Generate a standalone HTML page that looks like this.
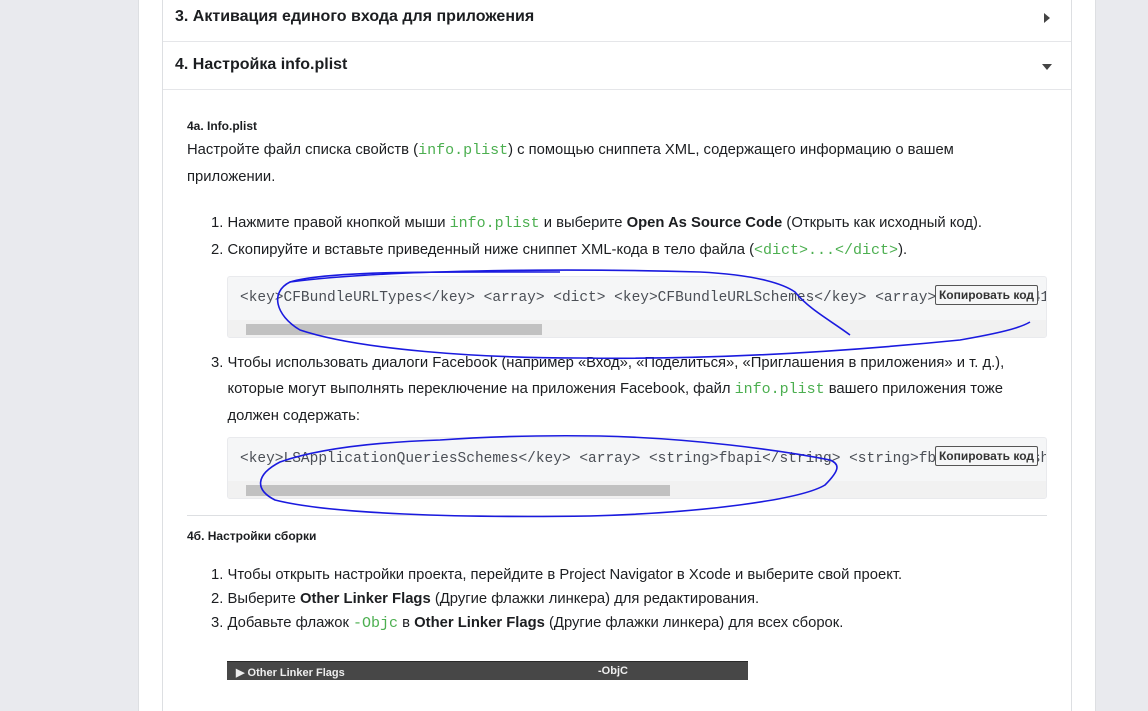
<!DOCTYPE html>
<html><head><meta charset="utf-8"><style>
*{margin:0;padding:0;box-sizing:border-box}
html,body{width:1148px;height:711px;overflow:hidden}
body{background:#e9eaee;font-family:"Liberation Sans",sans-serif;color:#1c1e21;position:relative}
.col{position:absolute;left:138px;top:0;width:958px;height:711px;background:#fff;border-left:1px solid #dddfe2;border-right:1px solid #dddfe2}
.card{position:absolute;left:162px;top:-2px;width:910px;height:713px;border-left:1px solid #dddfe2;border-right:1px solid #dddfe2}
.a{position:absolute;white-space:nowrap}
.h{font-size:16px;font-weight:bold;left:175px}
.hr{position:absolute;left:163px;width:908px;height:1px;background:#e5e6e9}
.t{font-size:14.8px;line-height:20px}
code{font-family:"Liberation Mono",monospace;color:#4caf50;font-size:15px}
.cb{position:absolute;left:227px;width:820px;height:62px;background:#f5f6f7;border:1px solid #e9eaed;border-radius:3px;overflow:hidden}
.cb .c{position:absolute;left:12px;top:13px;font-family:"Liberation Mono",monospace;font-size:14.5px;color:#4b4f56;white-space:nowrap}
.cb .sb{position:absolute;left:0;bottom:0;width:100%;height:17px;background:#f1f1f1}
.cb .th{position:absolute;left:18px;top:4px;height:11px;background:#c1c1c1}
.btn{position:absolute;right:8px;top:8px;border:1px solid #555;background:#f5f6f7;border-radius:2px;font-size:12px;font-weight:bold;padding:2px 3px;color:#333}
</style></head><body>
<div class="col"></div>
<div class="card"></div>
<div class="a h" style="top:8px">3. Активация единого входа для приложения</div>
<div class="a" style="left:1044px;top:13px;width:0;height:0;border-left:6px solid #444;border-top:5px solid transparent;border-bottom:5px solid transparent"></div>
<div class="hr" style="top:41px"></div>
<div class="a h" style="top:56px">4. Настройка info.plist</div>
<div class="a" style="left:1042px;top:64px;width:0;height:0;border-top:6px solid #444;border-left:5px solid transparent;border-right:5px solid transparent"></div>
<div class="hr" style="top:89px"></div>
<div class="a" style="left:187px;top:119px;font-size:12px;font-weight:bold">4a. Info.plist</div>
<div class="a t" style="left:187px;top:137px;line-height:26px">Настройте файл списка свойств (<code>info.plist</code>) с помощью сниппета XML, содержащего информацию о вашем<br>приложении.</div>
<div class="a t" style="left:211px;top:213px">1. Нажмите правой кнопкой мыши <code>info.plist</code> и выберите <b>Open As Source Code</b> (Открыть как исходный код).</div>
<div class="a t" style="left:211px;top:240px">2. Скопируйте и вставьте приведенный ниже сниппет XML-кода в тело файла (<code>&lt;dict&gt;...&lt;/dict&gt;</code>).</div>
<div class="cb" style="top:276px"><div class="c">&lt;key&gt;CFBundleURLTypes&lt;/key&gt; &lt;array&gt; &lt;dict&gt; &lt;key&gt;CFBundleURLSchemes&lt;/key&gt; &lt;array&gt; &lt;string&gt;fb4194</div><div class="btn">Копировать код</div><div class="sb"><div class="th" style="width:296px"></div></div></div>
<div class="a t" style="left:211px;top:350px;line-height:26px">3. Чтобы использовать диалоги Facebook (например «Вход», «Поделиться», «Приглашения в приложения» и т. д.),<br>&nbsp;&nbsp;&nbsp;&nbsp;которые могут выполнять переключение на приложения Facebook, файл <code>info.plist</code> вашего приложения тоже<br>&nbsp;&nbsp;&nbsp;&nbsp;должен содержать:</div>
<div class="cb" style="top:437px"><div class="c">&lt;key&gt;LSApplicationQueriesSchemes&lt;/key&gt; &lt;array&gt; &lt;string&gt;fbapi&lt;/string&gt; &lt;string&gt;fb-messenger-share</div><div class="btn">Копировать код</div><div class="sb"><div class="th" style="width:424px"></div></div></div>
<div class="a" style="left:187px;top:515px;width:860px;height:1px;background:#dddfe2"></div>
<div class="a" style="left:187px;top:529px;font-size:12px;font-weight:bold">4б. Настройки сборки</div>
<div class="a t" style="left:211px;top:565px">1. Чтобы открыть настройки проекта, перейдите в Project Navigator в Xcode и выберите свой проект.</div>
<div class="a t" style="left:211px;top:589px">2. Выберите <b>Other Linker Flags</b> (Другие флажки линкера) для редактирования.</div>
<div class="a t" style="left:211px;top:613px">3. Добавьте флажок <code>-Objc</code> в <b>Other Linker Flags</b> (Другие флажки линкера) для всех сборок.</div>
<div class="a" style="left:227px;top:661px;width:521px;height:19px;background:#474747;border-top:1px solid #2a2a2a;color:#eee;font-size:11px;font-weight:bold">
<span style="position:absolute;left:9px;top:4px">▶ Other Linker Flags</span><span style="position:absolute;left:371px;top:3px">-ObjC</span></div>
<svg style="position:absolute;left:0;top:0" width="1148" height="711" fill="none" stroke="#1a1adf" stroke-width="1.6">
<path d="M560 272 C450 272 330 270 290 282 C270 292 275 315 300 330 C360 350 480 358 580 358 C720 360 860 350 960 340 C1000 333 1020 328 1030 322"/>
<path d="M290 282 C380 270 560 268 700 272 C760 275 785 285 795 292 C810 310 830 320 850 335"/>
<path d="M440 440 C380 442 320 448 280 462 C255 475 255 490 275 500 C330 514 460 518 590 516 C700 513 800 500 825 485 C840 470 840 464 830 460 C780 450 690 438 600 436 C530 435 480 437 440 440"/>
</svg>
</body></html>
